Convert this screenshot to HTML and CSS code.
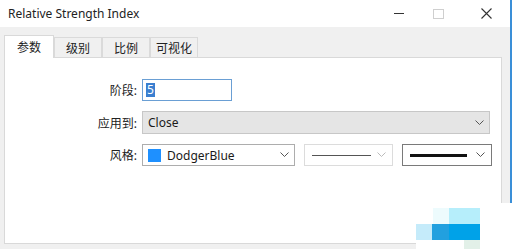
FILE: index.html
```html
<!DOCTYPE html>
<html lang="zh-CN">
<head>
    <meta charset="UTF-8">
    <title>Relative Strength Index</title>
    <link rel="stylesheet" href="styles.css">
</head>
<body>
    <div class="window">
        <div class="titlebar">
            <span class="title">Relative Strength Index</span>
            <div class="controls">
                <span class="ctl min"></span>
                <span class="ctl max"></span>
                <span class="ctl close">
                    <svg width="11" height="11" viewBox="0 0 11 11"><path d="M0.5 0.5L10.5 10.5M10.5 0.5L0.5 10.5" stroke="#333" stroke-width="1.1"/></svg>
                </span>
            </div>
        </div>

        <div class="dialog">
            <div class="tabs">
                <div class="tab active">参数</div>
                <div class="tab">级别</div>
                <div class="tab">比例</div>
                <div class="tab">可视化</div>
            </div>
            <div class="panel">
                <div class="form">
                    <label class="lbl">阶段:</label>
                    <div class="field"><div class="input"><span class="sel">5</span></div></div>

                    <label class="lbl">应用到:</label>
                    <div class="field">
                        <div class="select grey wide">
                            <span class="val">Close</span>
                            <svg class="chev" width="9" height="6" viewBox="0 0 9 6"><path d="M0.5 0.5L4.5 4.5L8.5 0.5" fill="none" stroke="#555"/></svg>
                        </div>
                    </div>

                    <label class="lbl">风格:</label>
                    <div class="field style-row">
                        <div class="select color">
                            <span class="swatch"></span>
                            <span class="val">DodgerBlue</span>
                            <svg class="chev" width="9" height="6" viewBox="0 0 9 6"><path d="M0.5 0.5L4.5 4.5L8.5 0.5" fill="none" stroke="#555"/></svg>
                        </div>
                        <div class="select line disabled">
                            <span class="stroke thin"></span>
                            <svg class="chev" width="9" height="6" viewBox="0 0 9 6"><path d="M0.5 0.5L4.5 4.5L8.5 0.5" fill="none" stroke="#bbb"/></svg>
                        </div>
                        <div class="select line dark">
                            <span class="stroke thick"></span>
                            <svg class="chev" width="9" height="6" viewBox="0 0 9 6"><path d="M0.5 0.5L4.5 4.5L8.5 0.5" fill="none" stroke="#555"/></svg>
                        </div>
                    </div>
                </div>
            </div>
        </div>
        <div class="edge"></div>
        <div class="corner">
            <span class="px p1"></span>
            <span class="px p2"></span>
            <span class="px p3"></span>
            <span class="px p4"></span>
            <span class="px p5"></span>
            <span class="px p6"></span>
        </div>
    </div>
</body>
</html>
```

FILE: styles.css
```css
* {
    box-sizing: border-box;
}

body {
    margin: 0;
    font-family: "Noto Sans", "Noto Sans CJK SC", sans-serif;
    font-size: 12px;
    color: #1a1a1a;
    background: #fff;
}

.window {
    position: relative;
    width: 512px;
    height: 249px;
    overflow: hidden;
}

.titlebar {
    height: 27px;
    display: flex;
    align-items: center;
    justify-content: space-between;
    padding-left: 8px;
    background: #fff;
}

.title {
    font-size: 12px;
    color: #222;
}

.controls {
    display: flex;
    align-items: center;
    height: 100%;
}

.ctl {
    display: flex;
    align-items: center;
    justify-content: center;
}

.min {
    width: 10px;
    height: 1px;
    background: #333;
    margin-right: 29px;
}

.max {
    width: 11px;
    height: 10px;
    border: 1px solid #cfcfcf;
    margin-right: 37px;
}

.close {
    margin-right: 20px;
}

.dialog {
    height: 222px;
    background: #f0f0f0;
    padding: 7px 10px 0 4px;
}

.tabs {
    display: flex;
    align-items: flex-end;
    height: 23px;
}

.tab {
    width: 48px;
    height: 20px;
    margin-right: 0;
    display: flex;
    align-items: center;
    justify-content: center;
    border: 1px solid #dadada;
    border-bottom: none;
    background: #f0f0f0;
    color: #222;
    font-size: 12px;
}

.tab.active {
    width: 50px;
    height: 23px;
    background: #fff;
    border-color: #d9d9d9;
    margin-bottom: -1px;
    position: relative;
    z-index: 1;
}

.panel {
    height: 187px;
    background: #fff;
    border: 1px solid #d9d9d9;
}

.form {
    display: grid;
    grid-template-columns: 132px 1fr;
    column-gap: 5px;
    row-gap: 10px;
    padding-top: 21px;
    align-items: center;
}

.lbl {
    text-align: right;
    font-size: 12px;
    color: #222;
}

.field {
    display: flex;
}

.input {
    width: 90px;
    height: 22px;
    border: 1px solid #6a9fd4;
    background: #fff;
    padding: 2px 3px;
    display: flex;
    align-items: center;
}

.sel {
    background: #3a7fd0;
    color: #fff;
    line-height: 14px;
    padding: 0 1px;
}

.select {
    height: 22px;
    border: 1px solid #adadad;
    background: #fff;
    display: flex;
    align-items: center;
    padding: 0 5px;
}

.select .chev {
    margin-left: auto;
}

.grey {
    background: #e5e5e5;
    border-color: #c7c7c7;
}

.wide {
    width: 348px;
    height: 23px;
}

.style-row {
    gap: 9px;
}

.color {
    width: 153px;
    border-color: #adadad;
}

.swatch {
    width: 13px;
    height: 13px;
    background: #1e90ff;
    margin-right: 6px;
}

.line {
    width: 89px;
    padding: 0 6px 0 7px;
}

.disabled {
    border-color: #dcdcdc;
}

.dark {
    width: 90px;
    border-color: #7a7a7a;
}

.stroke {
    display: block;
    background: #333;
}

.thin {
    width: 59px;
    height: 1px;
    background: #555;
}

.thick {
    width: 57px;
    height: 3px;
    background: #111;
}

.edge {
    position: absolute;
    right: 0;
    top: 0;
    width: 2px;
    height: 203px;
    background: #3a8fd8;
}

.corner {
    position: absolute;
    left: 416px;
    top: 203px;
    width: 96px;
    height: 46px;
    background: #fff;
}

.px {
    position: absolute;
}

.p1 { left: 17px; top: 5px; width: 16px; height: 16px; background: #edfbfd; }
.p2 { left: 33px; top: 5px; width: 31px; height: 16px; background: #b6eefb; }
.p3 { left: 0; top: 21px; width: 16px; height: 16px; background: #c5ebfa; }
.p4 { left: 16px; top: 21px; width: 17px; height: 16px; background: #22a0df; }
.p5 { left: 33px; top: 21px; width: 31px; height: 16px; background: #00a2e8; }
.p6 { left: 48px; top: 37px; width: 16px; height: 9px; background: #e2f0e8; }
```
